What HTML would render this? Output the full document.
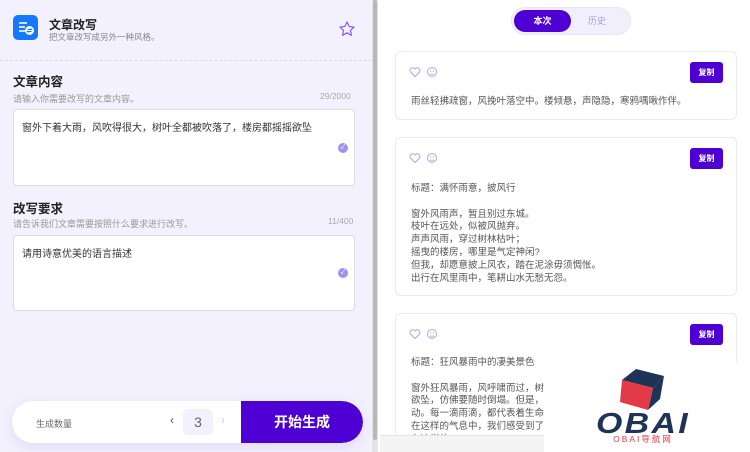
<!DOCTYPE html>
<html><head><meta charset="utf-8"><style>
*{margin:0;padding:0;box-sizing:border-box}
html,body{width:750px;height:452px;overflow:hidden}
body{background:#fff;font-family:"Liberation Sans","Noto Sans CJK SC",sans-serif;position:relative}
.a{position:absolute}
.left{left:0;top:0;width:372px;height:452px;background:#f3f1fd}
.sb{left:372px;top:0;width:6px;height:452px;background:#e4e4e4}
.sb i{position:absolute;left:1px;top:0;width:4px;height:440px;background:#b8b8b8;border-radius:2px}
.t13{font-size:12.5px;font-weight:bold;color:#222}
.hint{font-size:9px;color:#999}
.ta{background:#fff;border:1px solid #ddd;border-radius:4px;left:13px;width:342px}
.ta p{position:absolute;left:8px;top:9px;font-size:10px;color:#333}
.chk{width:10px;height:10px;border-radius:50%;background:#a28ff0;color:#fff;font-size:7px;line-height:10px;text-align:center}
.card{left:395px;width:342px;background:#fff;border:1px solid #eceaf3;border-radius:6px}
.copy{position:absolute;right:13px;top:10px;width:33px;height:21px;background:#4e00d4;border-radius:3px;color:#fff;font-size:8px;font-weight:bold;text-align:center;line-height:21px}
.ic{position:absolute;top:14px;left:13px}
.txt{position:absolute;left:15px;font-size:9.5px;color:#555;line-height:12.8px;white-space:pre}
</style></head><body>
<div class="a left"></div>
<div class="a" style="left:13px;top:15px;width:25px;height:25px;background:#1677ff;border-radius:5px">
<svg width="25" height="25"><rect x="6" y="7" width="8" height="2" fill="#cfe2ff"/><rect x="6" y="11" width="6" height="2" fill="#cfe2ff"/><rect x="6" y="15" width="6" height="2" fill="#cfe2ff"/><circle cx="16.5" cy="15.5" r="4.5" fill="#fff"/><path d="M14.5 14.5h4l-1-1M18.5 16.5h-4l1 1" stroke="#1677ff" stroke-width="1" fill="none"/></svg></div>
<div class="a t13" style="left:49px;top:16px;font-size:12px">文章改写</div>
<div class="a" style="left:49px;top:31px;font-size:8.5px;color:#888">把文章改写成另外一种风格。</div>
<svg class="a" style="left:338px;top:20px" width="18" height="18" viewBox="0 0 24 24"><path d="M12 2.5l2.9 6.2 6.6.7-5 4.5 1.5 6.6L12 17.1 6 20.5l1.5-6.6-5-4.5 6.6-.7z" fill="none" stroke="#8a5cf5" stroke-width="1.6" stroke-linejoin="round"/></svg>
<div class="a" style="left:0;top:60px;width:372px;border-top:1px dashed #dcdae6"></div>
<div class="a t13" style="left:13px;top:71px">文章内容</div>
<div class="a hint" style="left:13px;top:92px">请输入你需要改写的文章内容。</div>
<div class="a hint" style="left:320px;top:91px;font-size:8.5px;color:#aaa">29/2000</div>
<div class="a ta" style="top:109px;height:77px"><p>窗外下着大雨，风吹得很大，树叶全都被吹落了，楼房都摇摇欲坠</p><div class="a chk" style="left:324px;top:33px">✓</div></div>
<div class="a t13" style="left:13px;top:198px">改写要求</div>
<div class="a hint" style="left:13px;top:217px">请告诉我们文章需要按照什么要求进行改写。</div>
<div class="a hint" style="left:328px;top:216px;font-size:8.5px;color:#aaa">11/400</div>
<div class="a ta" style="top:235px;height:76px"><p>请用诗意优美的语言描述</p><div class="a chk" style="left:324px;top:32px">✓</div></div>
<div class="a" style="left:12px;top:401px;width:351px;height:42px;background:#fff;border-radius:21px;box-shadow:0 4px 12px rgba(120,90,220,.15);overflow:hidden">
<div class="a" style="left:24px;top:16px;font-size:9px;color:#666">生成数量</div>
<div class="a" style="left:158px;top:12px;font-size:12px;color:#555">‹</div>
<div class="a" style="left:171px;top:8px;width:30px;height:26px;background:#f3f1fd;border-radius:5px;font-size:14px;color:#666;text-align:center;line-height:26px">3</div>
<div class="a" style="left:209px;top:12px;font-size:12px;color:#ccc">›</div>
<div class="a" style="left:229px;top:0;width:122px;height:42px;background:#4e00d4;border-radius:0 21px 21px 0;color:#fff;font-size:14px;font-weight:bold;text-align:center;line-height:42px">开始生成</div></div>
<div class="a sb"><i></i></div>
<div class="a" style="left:511px;top:7px;width:120px;height:28px;background:#f1effc;border:1px solid #e8e5f7;border-radius:14px">
<div class="a" style="left:2px;top:2px;width:57px;height:22px;background:#4e00d4;border-radius:11px;color:#fff;font-size:9px;font-weight:bold;text-align:center;line-height:22px">本次</div>
<div class="a" style="left:76px;top:2px;font-size:9px;color:#a89ee8;line-height:22px">历史</div></div>
<div class="a card" style="top:51px;height:69px">
<svg class="ic" width="30" height="12"><path d="M6 10.5L1.5 6A2.6 2.6 0 0 1 6 3a2.6 2.6 0 0 1 4.5 3z" fill="none" stroke="#aaa8e6" stroke-width="1"/><circle cx="23" cy="6" r="4.5" fill="none" stroke="#aaa8e6"/><path d="M21 8.3h4" stroke="#aaa8e6"/><circle cx="21.4" cy="5" r=".6" fill="#aaa8e6"/><circle cx="24.6" cy="5" r=".6" fill="#aaa8e6"/></svg>
<div class="copy">复制</div>
<div class="txt" style="top:44px">雨丝轻拂疏窗，风挽叶落空中。楼倾悬，声隐隐，寒鸦喁啾作伴。</div></div>
<div class="a card" style="top:137px;height:159px">
<svg class="ic" width="30" height="12"><path d="M6 10.5L1.5 6A2.6 2.6 0 0 1 6 3a2.6 2.6 0 0 1 4.5 3z" fill="none" stroke="#aaa8e6" stroke-width="1"/><circle cx="23" cy="6" r="4.5" fill="none" stroke="#aaa8e6"/><path d="M21 8.3h4" stroke="#aaa8e6"/><circle cx="21.4" cy="5" r=".6" fill="#aaa8e6"/><circle cx="24.6" cy="5" r=".6" fill="#aaa8e6"/></svg>
<div class="copy">复制</div>
<div class="txt" style="top:45px">标题：满怀雨意，披风行

窗外风雨声，暂且别过东城。
枝叶在远处，似被风抛弃。
声声风雨，穿过树林枯叶；
摇曳的楼房，哪里是气定神闲?
但我，却愿意披上风衣，踏在泥涂毋须惆怅。
出行在风里雨中，笔耕山水无愁无怨。</div></div>
<div class="a card" style="top:313px;height:160px;overflow:hidden">
<svg class="ic" width="30" height="12"><path d="M6 10.5L1.5 6A2.6 2.6 0 0 1 6 3a2.6 2.6 0 0 1 4.5 3z" fill="none" stroke="#aaa8e6" stroke-width="1"/><circle cx="23" cy="6" r="4.5" fill="none" stroke="#aaa8e6"/><path d="M21 8.3h4" stroke="#aaa8e6"/><circle cx="21.4" cy="5" r=".6" fill="#aaa8e6"/><circle cx="24.6" cy="5" r=".6" fill="#aaa8e6"/></svg>
<div class="copy">复制</div>
<div class="txt" style="top:43px">标题：狂风暴雨中的凄美景色

窗外狂风暴雨，风呼啸而过，树叶纷纷飘落，楼房摇摇
欲坠，仿佛要随时倒塌。但是，这一切都显得如此生
动。每一滴雨滴，都代表着生命的力量与坚韧，
在这样的气息中，我们感受到了一种难以言说的美
在这样的</div></div>
<div class="a" style="left:380px;top:435px;width:370px;height:17px;background:#f4f4f4;border-top:1px solid #e6e6e6"></div>
<div class="a" style="left:544px;top:362px;width:206px;height:90px;background:#fff"></div>
<svg class="a" style="left:590px;top:364px" width="110" height="84" viewBox="0 0 110 84">
<path d="M32 16l14-11 28 7-11 12z" fill="#1e3355"/>
<path d="M63 24l11-12-4 23-12 11z" fill="#1e3355"/>
<path d="M32 16l31 8-5 22-28-8z" fill="#e23a48"/>
<text x="53" y="69" font-family="Liberation Sans" font-size="29" font-weight="bold" font-style="italic" fill="#1e3355" text-anchor="middle" letter-spacing="2" textLength="94" lengthAdjust="spacingAndGlyphs">OBAI</text>
<text x="53" y="78" font-family="Liberation Sans,Noto Sans CJK SC,sans-serif" font-size="8.5" fill="#e23a48" text-anchor="middle" letter-spacing="2">OBAI导航网</text>
</svg>
</body></html>
